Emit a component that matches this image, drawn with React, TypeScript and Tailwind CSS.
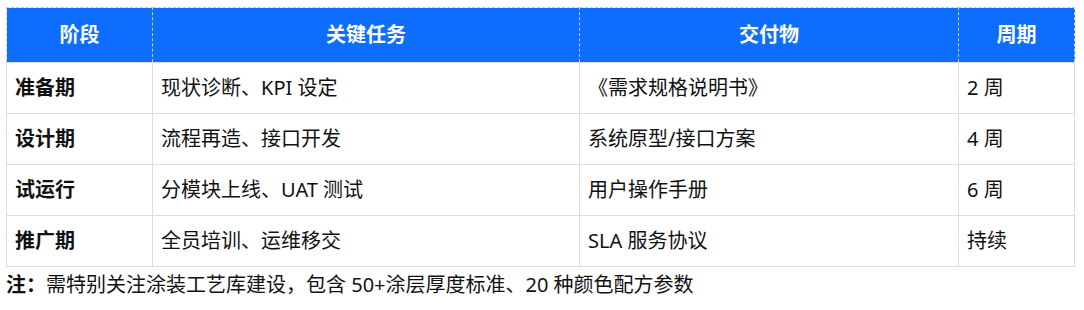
const rows = [
  { stage: '准备期', task: '现状诊断、KPI 设定', output: '《需求规格说明书》', period: '2 周' },
  { stage: '设计期', task: '流程再造、接口开发', output: '系统原型/接口方案', period: '4 周' },
  { stage: '试运行', task: '分模块上线、UAT 测试', output: '用户操作手册', period: '6 周' },
  { stage: '推广期', task: '全员培训、运维移交', output: 'SLA 服务协议', period: '持续' },
];

const headers = ['阶段', '关键任务', '交付物', '周期'];

export default function App() {
  return (
    <div
      className="bg-white w-[1084px] h-[310px] pt-[7px] pl-[6px] text-[20px] text-[#111]"
      style={{ fontFamily: '"Noto Sans", "Noto Sans CJK SC", sans-serif' }}
    >
      <table className="w-[1068px] border-collapse table-fixed">
        <colgroup>
          <col className="w-[146px]" />
          <col className="w-[427px]" />
          <col className="w-[379px]" />
          <col className="w-[116px]" />
        </colgroup>
        <thead>
          <tr className="bg-[#0d6efd] h-[55px]">
            {headers.map((h) => (
              <th key={h} className="border border-dashed border-[#c9c9c9] text-white font-bold text-center">
                {h}
              </th>
            ))}
          </tr>
        </thead>
        <tbody>
          {rows.map((r) => (
            <tr key={r.stage} className="h-[51px]">
              <td className="border border-[#dddddd] px-[8px] font-bold">{r.stage}</td>
              <td className="border border-[#dddddd] px-[8px]">{r.task}</td>
              <td className="border border-[#dddddd] px-[8px]">{r.output}</td>
              <td className="border border-[#dddddd] px-[8px]">{r.period}</td>
            </tr>
          ))}
        </tbody>
      </table>
      <p className="mt-[4px] leading-[28px]">
        <span className="font-bold">注：</span>需特别关注涂装工艺库建设，包含 50+涂层厚度标准、20 种颜色配方参数
      </p>
    </div>
  );
}
